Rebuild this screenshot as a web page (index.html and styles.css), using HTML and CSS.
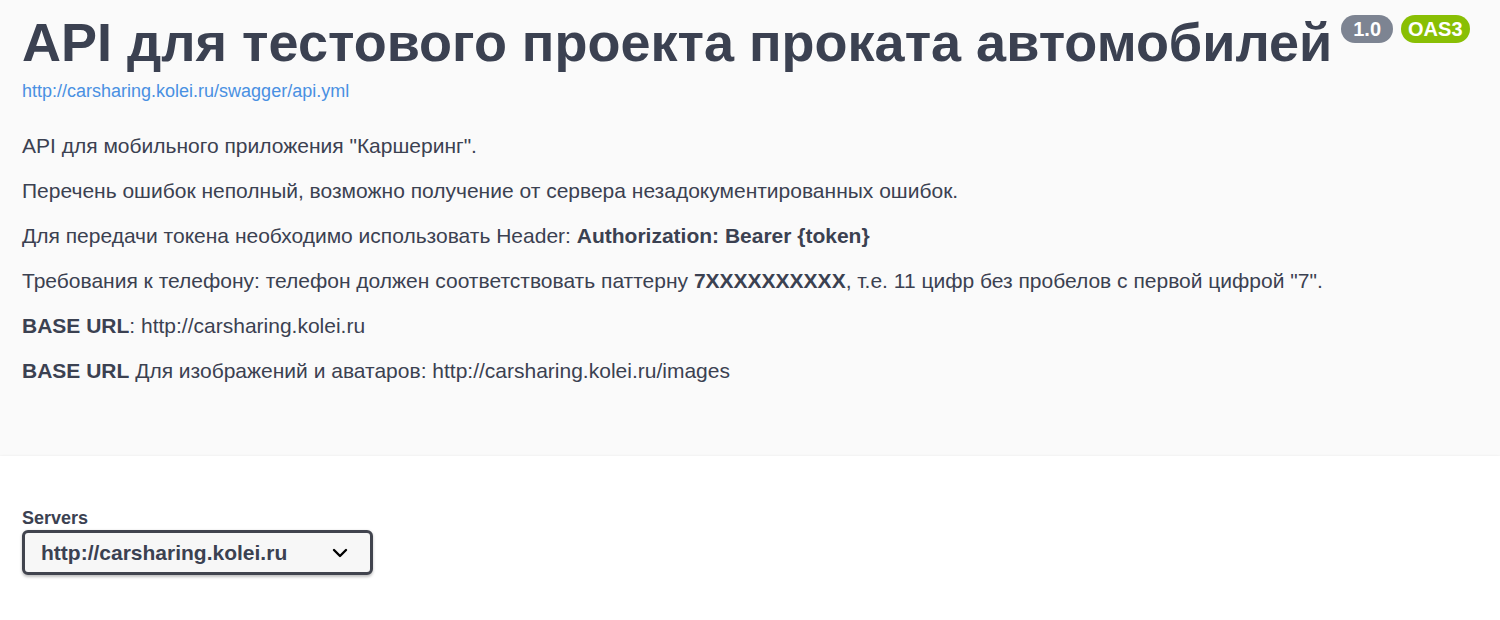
FILE: index.html
```html
<!DOCTYPE html>
<html lang="ru">
<head>
    <meta charset="UTF-8">
    <meta name="viewport" content="width=device-width, initial-scale=1.0">
    <title>Swagger UI</title>
    <link rel="stylesheet" href="styles.css">
</head>
<body>
    <div class="info">
        <h2 class="title">
            <span>API для тестового проекта проката автомобилей</span>
            <span class="badge badge-version">1.0</span>
            <span class="badge badge-oas">OAS3</span>
        </h2>
        <a class="spec-link" href="#">http://carsharing.kolei.ru/swagger/api.yml</a>
        <div class="description">
            <p>API для мобильного приложения "Каршеринг".</p>
            <p>Перечень ошибок неполный, возможно получение от сервера незадокументированных ошибок.</p>
            <p>Для передачи токена необходимо использовать Header: <strong>Authorization: Bearer {token}</strong></p>
            <p>Требования к телефону: телефон должен соответствовать паттерну <strong>7XXXXXXXXXX</strong>, т.е. 11 цифр без пробелов с первой цифрой "7".</p>
            <p><strong>BASE URL</strong>: http://carsharing.kolei.ru</p>
            <p><strong>BASE URL</strong> Для изображений и аватаров: http://carsharing.kolei.ru/images</p>
        </div>
    </div>
    <div class="scheme-container">
        <div class="servers-title">Servers</div>
        <div class="servers-select">
            <span>http://carsharing.kolei.ru</span>
            <svg width="16" height="10" viewBox="0 0 16 10"><polyline points="2,2 8,8 14,2" fill="none" stroke="#000" stroke-width="2.4" stroke-linecap="round" stroke-linejoin="round"/></svg>
        </div>
    </div>
</body>
</html>
```

FILE: styles.css
```css
body { margin: 0; background: #fafafa; color: #3b4151; font-family: "Liberation Sans", Arial, sans-serif; }
.info { padding: 11px 22px 73px; }
.title { margin: 0; display: flex; align-items: flex-start; font-size: 54px; line-height: 62px; font-weight: bold; color: #3b4151; }
.badge {
    display: inline-block; margin-top: 4px; margin-left: 8px; padding: 0 12px; height: 28px; line-height: 28px;
    border-radius: 14px; font-size: 20px; font-weight: bold; color: #fff;
}
.badge-version { background: #7d8492; margin-left: 9px; }
.badge-oas { background: #89bf04; padding: 0 7px; }
.spec-link { display: block; margin-top: 8px; font-size: 18px; line-height: 21px; color: #4990e2; text-decoration: none; }
.description { margin-top: 32px; font-size: 21px; line-height: 24px; }
.description p { margin: 0 0 21px; }
.description p:last-child { margin-bottom: 0; }
.scheme-container { background: #fff; box-shadow: 0 1px 3px 0 rgba(0, 0, 0, 0.15); padding: 52px 22px 60px; }
.servers-title { font-size: 18px; line-height: 21px; font-weight: bold; margin-bottom: 1px; }
.servers-select {
    display: flex; align-items: center; justify-content: space-between; box-sizing: border-box;
    width: 351px; height: 45px; padding: 0 22px 0 16px; border: 3px solid #41444e; border-radius: 6px;
    background: #f7f7f7; box-shadow: 0 1.5px 3px 0 rgba(0, 0, 0, 0.25); font-size: 21px; font-weight: bold;
}
```
